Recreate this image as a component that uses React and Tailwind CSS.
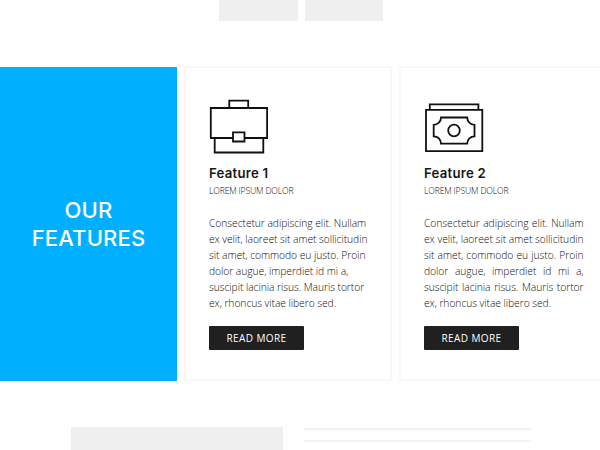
const lines = [
  'Consectetur adipiscing elit. Nullam',
  'ex velit, laoreet sit amet sollicitudin',
  'sit amet, commodo eu justo. Proin',
  'dolor augue, imperdiet id mi a,',
  'suscipit lacinia risus. Mauris tortor',
  'ex, rhoncus vitae libero sed.',
];

function Briefcase() {
  return (
    <svg width="62" height="58" viewBox="0 0 62 58" fill="none" stroke="#111" strokeWidth="1.8" className="block">
      <path d="M20.3 10V2.6H39.2V10M1.8 10h56.3v30H1.8zM5.7 40v14.5h48.6V40" />
      <path d="M24 34.3h11.5v9.2H24z" fill="#fff" />
    </svg>
  );
}

function Banknote() {
  return (
    <svg width="62" height="58" viewBox="0 0 62 58" fill="none" stroke="#111" strokeWidth="1.8" className="block">
      <path d="M5.8 12V6.4h48.6V12M2 11.8h56.3v41.4H2z" />
      <path d="M17 19.5h26.2a7.3 7.3 0 0 0 7.3 7.3v11.5a7.3 7.3 0 0 0-7.3 7.3H17a7.3 7.3 0 0 0-7.3-7.3V26.8a7.3 7.3 0 0 0 7.3-7.3z" />
      <circle cx="30" cy="32.5" r="5.8" />
    </svg>
  );
}

function Feature({ title, icon, justified }) {
  return (
    <article className="h-[315px] w-[208px] shrink-0 border-2 border-[#f8f8f8] bg-white pl-[23px] pt-[30px]">
      <div className="h-[58px]">{icon}</div>
      <h3 className="mt-[7px] h-5 whitespace-nowrap font-['Inter',sans-serif] text-[13.2px] font-semibold leading-5 tracking-[0.25px] text-[#171717]">{title}</h3>
      <p className="h-4 whitespace-nowrap text-[8.6px] leading-4 tracking-[-0.15px] text-[#111]">LOREM IPSUM DOLOR</p>
      <p className="mt-4 w-[160px] text-[10.3px] leading-4 tracking-[-0.06px] text-[#111]">
        {lines.map((line, i) => (
          <span
            key={line}
            className={justified && i < 5 ? 'block w-[159.5px] whitespace-nowrap [text-align-last:justify]' : 'block whitespace-nowrap'}
          >
            {line}
          </span>
        ))}
      </p>
      <button className="mt-[15px] block h-6 w-[95px] whitespace-nowrap rounded-[1px] bg-[#202020] text-[10px] font-normal leading-6 tracking-[0.4px] text-white">
        READ MORE
      </button>
    </article>
  );
}

export default function App() {
  return (
    <main className="flex h-[450px] w-[600px] flex-col overflow-hidden bg-[#fefefe] font-['Open_Sans',sans-serif] font-light">
      <div className="flex h-[66px] shrink-0 gap-[7px] pl-[219px]">
        <div className="h-[21px] w-[79px] bg-[#efefef]" />
        <div className="h-[21px] w-[78px] bg-[#efefef]" />
      </div>
      <section className="flex h-[315px] shrink-0 gap-[7px]">
        <div className="mt-px flex h-[314px] w-[177px] shrink-0 items-center justify-center bg-[#00b0ff] text-center">
          <h2 className="whitespace-nowrap font-['Inter',sans-serif] text-[22px] font-medium leading-7 tracking-[0.15px] text-white">
            OUR<br />FEATURES
          </h2>
        </div>
        <Feature title="Feature 1" icon={<Briefcase />} />
        <Feature title="Feature 2" icon={<Banknote />} justified />
      </section>
      <div className="flex gap-[21px] pl-[71px] pt-[46px]">
        <div className="h-[23px] w-[212px] bg-[#efefef]" />
        <div className="w-[227px] pt-px">
          <div className="h-[2px] bg-[#f1f1f1]" />
          <div className="mt-[10px] h-[2px] bg-[#f3f3f3]" />
        </div>
      </div>
    </main>
  );
}
